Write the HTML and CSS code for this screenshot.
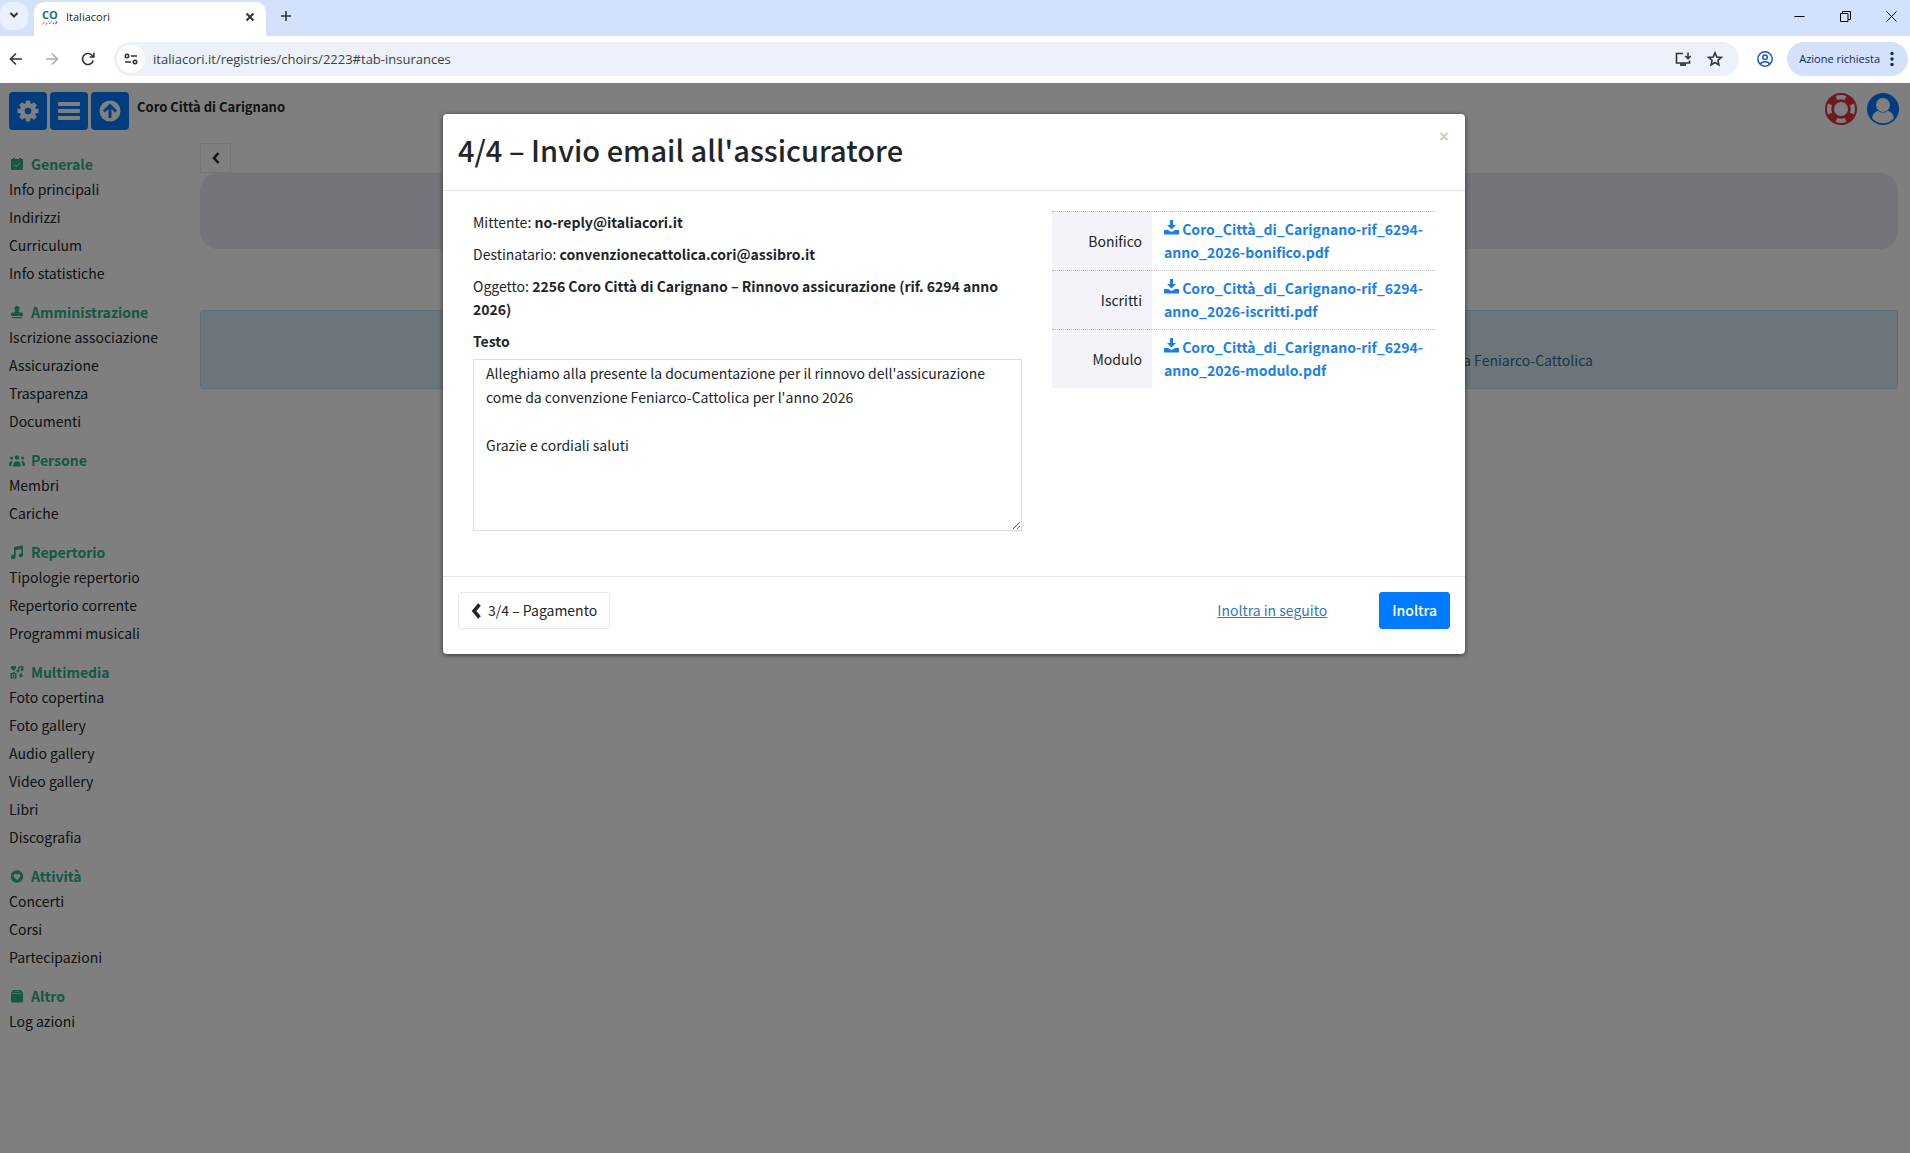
FILE: index.html
```html
<!DOCTYPE html>
<html lang="it">
<head>
<meta charset="utf-8">
<title>Italiacori</title>
<link rel="stylesheet" href="styles.css">
</head>
<body>
<header class="browser">
  <div class="tabstrip">
    <button class="tab-search" aria-label="Cerca schede"><svg width="10" height="10" viewBox="0 0 10 10"><path d="M1.5 3l3.500 3.500L8.500 3" class="line heavy"/></svg></button>
    <div class="tab">
      <span class="favicon" aria-hidden="true"><b>CO</b><svg width="16" height="5" viewBox="0 0 16 5" stroke-width="1.300"><path d="M.5 4.500l2-3" stroke="#e5a52b"/><path d="M4 4.500l1-1.500M6 1.500l.5-.7" stroke="#d9534f"/><path d="M7.500 4l1-1.500M9.500 1.500l.5-.7" stroke="#2f7bbf"/><path d="M11 4l1-1.500" stroke="#3c9d5b"/><path d="M13.500 4.200l1.500-3" stroke="#a0458c"/></svg></span>
      <span class="tab-title">Italiacori</span>
      <button class="icon-btn" aria-label="Chiudi scheda"><svg width="10" height="10" viewBox="0 0 10 10"><path d="M1.500 1.500l7 7M8.500 1.500l-7 7" class="line heavy"/></svg></button>
    </div>
    <button class="icon-btn new-tab" aria-label="Nuova scheda"><svg width="12" height="12" viewBox="0 0 12 12"><path d="M6 1v10M1 6h10" class="line"/></svg></button>
    <div class="window-controls">
      <button class="icon-btn" aria-label="Riduci"><svg width="11" height="11" viewBox="0 0 11 11"><path d="M.5 5.500h10" stroke="#000"/></svg></button>
      <button class="icon-btn" aria-label="Ripristina"><svg width="11" height="11" viewBox="0 0 11 11" fill="none" stroke="#000"><path d="M.5 2.500h7.500v8H.5zM2.500 2.500V.5h8v8H8"/></svg></button>
      <button class="icon-btn" aria-label="Chiudi"><svg width="11" height="11" viewBox="0 0 11 11"><path d="M.5.5l10 10M10.500.5l-10 10" stroke="#000"/></svg></button>
    </div>
  </div>
  <div class="toolbar">
    <div class="nav-buttons">
      <button class="icon-btn" aria-label="Indietro"><svg width="14" height="14" viewBox="0 0 14 14"><path d="M13 7H2M7 1.500L1.500 7 7 12.500" class="line"/></svg></button>
      <button class="icon-btn faded" aria-label="Avanti"><svg width="14" height="14" viewBox="0 0 14 14"><path d="M1 7h11M7 1.500L12.500 7 7 12.500" class="line"/></svg></button>
      <button class="icon-btn" aria-label="Ricarica"><svg width="14" height="14" viewBox="0 0 14 14"><path d="M12.300 8.500A5.500 5.500 0 1 1 11 3.200L12.800 5M12.900.8V5H8.700" class="line"/></svg></button>
    </div>
    <div class="address">
      <button class="site-info" aria-label="Informazioni sul sito"><svg width="14" height="12" viewBox="0 0 14 12"><g class="line"><circle cx="3" cy="3" r="1.700"/><path d="M7 3h6M1 9h6"/><circle cx="11" cy="9" r="1.700"/></g></svg></button>
      <input class="url" type="text" value="italiacori.it/registries/choirs/2223#tab-insurances" aria-label="Indirizzo">
      <button class="icon-btn" aria-label="Installa"><svg width="16" height="15" viewBox="0 0 16 15"><path d="M8 1.500H1.500v9.500h13V8.500M13 .5v6M10.300 4L13 6.700 15.700 4" class="line"/><path d="M5 11h6v3H5z" fill="#444"/></svg></button>
      <button class="icon-btn" aria-label="Preferiti"><svg width="16" height="16" viewBox="0 0 16 16"><path d="M8 1.800l1.800 4.200 4.600.4-3.500 3 1 4.500L8 11.500l-3.900 2.400 1-4.500-3.500-3L6.200 6z" class="line"/></svg></button>
    </div>
    <button class="icon-btn profile" aria-label="Profilo"><svg width="16" height="16" viewBox="0 0 16 16" fill="none" stroke="#1b5bb5" stroke-width="1.500"><circle cx="8" cy="8" r="7.200"/><circle cx="8" cy="6.300" r="2.300"/><path d="M3.300 13.200c1.800-3.200 7.600-3.200 9.400 0"/></svg></button>
    <button class="action-chip">Azione richiesta<svg width="4" height="16" viewBox="0 0 4 16" fill="#0b2a5b"><circle cx="2" cy="2.500" r="1.700"/><circle cx="2" cy="8" r="1.700"/><circle cx="2" cy="13.500" r="1.700"/></svg></button>
  </div>
</header>

<div class="page">
  <div class="app">
    <div class="topbar">
      <button class="square" aria-label="Impostazioni"><svg width="22" height="22" viewBox="0 0 22 22"><g fill="#fff"><circle cx="11" cy="11" r="8"/><g id="teeth"><rect x="8.700" y=".5" width="4.600" height="21" rx="1"/><rect x=".5" y="8.700" width="21" height="4.600" rx="1"/></g><use href="#teeth" transform="rotate(45 11 11)"/></g><circle cx="11" cy="11" r="3.300" fill="#007bff"/></svg></button>
      <button class="square" aria-label="Menu"><svg width="22" height="20" viewBox="0 0 22 20" fill="#fff"><rect y="1" width="22" height="4" rx="1"/><rect y="8" width="22" height="4" rx="1"/><rect y="15" width="22" height="4" rx="1"/></svg></button>
      <button class="square" aria-label="Torna su"><svg width="22" height="22" viewBox="0 0 22 22"><circle cx="11" cy="11" r="10.500" fill="#fff"/><path d="M11 18V6M5 11.500l6-6 6 6" fill="none" stroke="#007bff" stroke-width="3"/></svg></button>
      <strong class="choir">Coro Città di Carignano</strong>
      <a class="round" href="#aiuto" aria-label="Aiuto"><svg width="32" height="32" viewBox="0 0 32 32" fill="none"><circle cx="16" cy="16" r="11.500" stroke="#dc3545" stroke-width="8"/><g stroke="#fff" stroke-width="5"><path d="M11.300 4.700a12.200 12.200 0 0 1 9.400 0M27.300 11.300a12.200 12.200 0 0 1 0 9.400M20.700 27.300a12.200 12.200 0 0 1-9.400 0M4.700 20.700a12.200 12.200 0 0 1 0-9.400"/></g><circle cx="16" cy="16" r="15" stroke="#dc3545" stroke-width="2"/><circle cx="16" cy="16" r="8" stroke="#dc3545" stroke-width="2"/></svg></a>
      <a class="round" href="#profilo" aria-label="Utente"><svg width="32" height="32" viewBox="0 0 32 32"><circle cx="16" cy="16" r="16" fill="#007bff"/><circle cx="16" cy="12" r="7" fill="#fff"/><path d="M5 25c1-5 4-7 6.500-7 2.500 2 6.500 2 9 0 2.500 0 5.500 2 6.500 7a14 14 0 0 1-22 0z" fill="#fff"/></svg></a>
    </div>
    <div class="columns">
      <nav class="sidebar">
        <section>
          <h2><svg viewBox="0 0 16 16"><path d="M4 2h2v1h4V2h2v1h2v10a1 1 0 0 1-1 1H3a1 1 0 0 1-1-1V3h2z"/><path d="M5 8.500l2.200 2.200L11 6.800" class="cut"/></svg>Generale</h2>
          <a href="#info">Info principali</a><a href="#indirizzi">Indirizzi</a><a href="#curriculum">Curriculum</a><a href="#statistiche">Info statistiche</a>
        </section>
        <section>
          <h2><svg viewBox="0 0 16 16"><path d="M8 2a2.600 2.600 0 0 1 2.200 4c-.8 1.200-.7 2.500 1 2.500h1.300A1.500 1.500 0 0 1 14 10v2H2v-2a1.500 1.500 0 0 1 1.500-1.500h1.300c1.700 0 1.800-1.300 1-2.500A2.600 2.600 0 0 1 8 2zM3 13h10v1.300H3z"/></svg>Amministrazione</h2>
          <a href="#iscrizione">Iscrizione associazione</a><a href="#assicurazione">Assicurazione</a><a href="#trasparenza">Trasparenza</a><a href="#documenti">Documenti</a>
        </section>
        <section>
          <h2><svg viewBox="0 0 16 16"><circle cx="8" cy="5.500" r="2.300"/><circle cx="2.500" cy="6" r="1.500"/><circle cx="13.500" cy="6" r="1.500"/><path d="M4 14.500c0-7 8-7 8 0zM0 14C0 10 1 9 3.700 9 2.700 11 2.500 12 2.500 14zM16 14C16 10 15 9 12.300 9c1 2 1.200 3 1.200 5z"/></svg>Persone</h2>
          <a href="#membri">Membri</a><a href="#cariche">Cariche</a>
        </section>
        <section>
          <h2><svg viewBox="0 0 16 16"><path d="M5 3l9-1.800v10.300a2.200 1.900 0 1 1-1.600-1.900V5L6.600 6.300V13A2.300 2 0 1 1 5 11z"/></svg>Repertorio</h2>
          <a href="#tipologie">Tipologie repertorio</a><a href="#corrente">Repertorio corrente</a><a href="#programmi">Programmi musicali</a>
        </section>
        <section>
          <h2><svg viewBox="0 0 16 16"><path d="M4.500 7L2 4.500a1.600 1.600 0 0 1 2.500-2 1.600 1.600 0 0 1 2.500 2zM9 3l5.500-1.300v4a1.400 1.400 0 1 1-1-1.300v-1l-3.200.8v2.700A1.400 1.400 0 1 1 9 5.800zM2.500 9h1l.5-.8h1.500L6 9h1.500v5.500h-6V9zM11.500 9H13l-.5 2h1.800L11 14.500l.5-2.300H10z"/><circle cx="4.500" cy="11.800" r="1.400" class="cut"/></svg>Multimedia</h2>
          <a href="#copertina">Foto copertina</a><a href="#foto">Foto gallery</a><a href="#audio">Audio gallery</a><a href="#video">Video gallery</a><a href="#libri">Libri</a><a href="#discografia">Discografia</a>
        </section>
        <section>
          <h2><svg viewBox="0 0 16 16"><circle cx="8" cy="8.500" r="6.200"/><path d="M8 12L5 9a1.800 1.800 0 0 1 3-2.300A1.800 1.800 0 0 1 11 9z" fill="#fff"/></svg>Attività</h2>
          <a href="#concerti">Concerti</a><a href="#corsi">Corsi</a><a href="#partecipazioni">Partecipazioni</a>
        </section>
        <section>
          <h2><svg viewBox="0 0 16 16"><path d="M4 2h8l2 3v8a1.500 1.500 0 0 1-1.500 1.500h-9A1.500 1.500 0 0 1 2 13V5z"/><path d="M3 5.500h10M5.500 3.300h5" stroke="#fff" stroke-width=".6"/></svg>Altro</h2>
          <a href="#log">Log azioni</a>
        </section>
      </nav>
      <main class="content">
        <button class="back" aria-label="Indietro"><svg width="8" height="12" viewBox="0 0 8 12"><path d="M6.500 1L2 6l4.500 5" fill="none" stroke="#212529" stroke-width="2.500"/></svg></button>
        <div class="hero"></div>
        <p class="notice">a Feniarco-Cattolica</p>
      </main>
    </div>
  </div>

  <div class="backdrop">
    <form class="modal" role="dialog" aria-labelledby="titolo">
      <div class="modal-head">
        <h1 id="titolo">4/4 – Invio email all'assicuratore</h1>
        <button type="button" class="close" aria-label="Chiudi">×</button>
      </div>
      <div class="modal-body">
        <div class="mail">
          <p>Mittente: <b>no-reply@italiacori.it</b></p>
          <p>Destinatario: <b>convenzionecattolica.cori@assibro.it</b></p>
          <p>Oggetto: <b>2256 Coro Città di Carignano – Rinnovo assicurazione (rif. 6294 anno 2026)</b></p>
          <label for="testo">Testo</label>
          <textarea id="testo" rows="7">Alleghiamo alla presente la documentazione per il rinnovo dell'assicurazione come da convenzione Feniarco-Cattolica per l'anno 2026

Grazie e cordiali saluti</textarea>
        </div>
        <table class="files">
          <tr><th scope="row">Bonifico</th><td><a href="#bonifico"><svg width="15" height="15" viewBox="0 0 15 15"><path d="M6 0h3v5h3L7.500 9.500 3 5h3zM0 10h4l3.500 2L11 10h4v4.500H0z"/></svg> Coro_Città_di_Carignano-rif_6294-<br>anno_2026-bonifico.pdf</a></td></tr>
          <tr><th scope="row">Iscritti</th><td><a href="#iscritti"><svg width="15" height="15" viewBox="0 0 15 15"><path d="M6 0h3v5h3L7.500 9.500 3 5h3zM0 10h4l3.500 2L11 10h4v4.500H0z"/></svg> Coro_Città_di_Carignano-rif_6294-<br>anno_2026-iscritti.pdf</a></td></tr>
          <tr><th scope="row">Modulo</th><td><a href="#modulo"><svg width="15" height="15" viewBox="0 0 15 15"><path d="M6 0h3v5h3L7.500 9.500 3 5h3zM0 10h4l3.500 2L11 10h4v4.500H0z"/></svg> Coro_Città_di_Carignano-rif_6294-<br>anno_2026-modulo.pdf</a></td></tr>
        </table>
      </div>
      <div class="modal-foot">
        <button type="button" class="btn"><svg width="10" height="16" viewBox="0 0 10 16"><path d="M8.500 1.500L3 8l5.500 6.500" fill="none" stroke="#212529" stroke-width="3.500"/></svg>3/4 – Pagamento</button>
        <a class="later" href="#dopo">Inoltra in seguito</a>
        <button type="button" class="btn primary">Inoltra</button>
      </div>
    </form>
  </div>
</div>
</body>
</html>
```
FILE: styles.css
```css
* { box-sizing: border-box; }

body {
  margin: 0;
  min-height: 100vh;
  display: flex;
  flex-direction: column;
  font: 14px/23px "Noto Sans CJK JP", "Open Sans", sans-serif;
  color: #212529;
}

button {
  padding: 0;
  border: 0;
  background: none;
  font: inherit;
  color: inherit;
}

svg { flex: none; }

/* Browser frame */
.browser {
  font: 11px/16px "Open Sans", "Noto Sans", sans-serif;
  color: #1f1f1f;
}

.line {
  fill: none;
  stroke: #333;
  stroke-width: 1.600;
}

.heavy { stroke-width: 2; }

.tabstrip {
  display: flex;
  height: 36px;
  background: #d3e1fc;
}

.tab-search {
  width: 28px;
  height: 28px;
  margin-top: 2px;
  border-radius: 10px;
  background: #e9f0fd;
}

.tab {
  display: flex;
  align-items: center;
  width: 232px;
  margin: 2px 0 0 6px;
  padding: 0 10px 4px 8px;
  border-radius: 10px 10px 0 0;
  background: #fff;
}

.favicon {
  width: 16px;
  height: 16px;
  font: 11px/11px "Open Sans", sans-serif;
  color: #1d6e7d;
}

.favicon b, .favicon svg { display: block; }

.tab-title {
  flex: 1;
  margin-left: 8px;
}

.icon-btn {
  display: flex;
  align-items: center;
  justify-content: center;
  width: 24px;
  height: 24px;
}

.tab .icon-btn { width: 12px; }

.new-tab { margin: 4px 0 0 8px; }

.window-controls {
  display: flex;
  align-items: center;
  margin-left: auto;
  padding-bottom: 4px;
}

.window-controls .icon-btn { width: 46px; }
.window-controls .icon-btn:last-child { width: 38px; margin-left: 4px; }

.toolbar {
  display: flex;
  align-items: center;
  height: 47px;
  padding: 0 2px 1px 4px;
  background: #fff;
}

.nav-buttons {
  display: flex;
  gap: 12px;
  margin-right: 14px;
}

.faded { opacity: .4; }

.address {
  flex: 1;
  display: flex;
  align-items: center;
  gap: 8px;
  height: 34px;
  padding: 0 12px 0 3px;
  border-radius: 17px;
  background: #ecf0f9;
}

.site-info {
  display: flex;
  align-items: center;
  justify-content: center;
  width: 28px;
  height: 28px;
  border-radius: 14px;
  background: #fff;
}

.url {
  flex: 1;
  padding: 0;
  border: 0;
  background: none;
  font: inherit;
  font-size: 13px;
  color: #3c3f43;
}

.profile { margin: 0 10px 0 14px; }

.action-chip {
  display: flex;
  align-items: center;
  gap: 10px;
  height: 34px;
  padding: 0 14px 0 12px;
  border-radius: 17px;
  background: #d3e1fc;
  color: #0b2a5b;
}

/* Application */
.page {
  position: relative;
  flex: 1;
}

.topbar {
  display: flex;
  align-items: flex-start;
  gap: 3px;
  padding: 9px 11px 0 9px;
}

.square {
  display: flex;
  align-items: center;
  justify-content: center;
  width: 38px;
  height: 38px;
  border-radius: 4px;
  background: #007bff;
}

.choir {
  flex: 1;
  margin: 3px 0 0 5px;
  font-size: 13px;
}

.round {
  height: 32px;
  margin: 1px 0 0 7px;
}

.round svg { display: block; }

.columns {
  display: flex;
  padding: 13px 12px 0 9px;
}

.sidebar {
  width: 191px;
  padding-top: 10px;
}

.sidebar section { margin-bottom: 14px; }

.sidebar h2 {
  display: flex;
  align-items: center;
  gap: 6px;
  margin: 0;
  font-size: 14px;
  line-height: 22px;
  color: #28b08a;
}

.sidebar h2 svg {
  width: 16px;
  height: 16px;
  fill: currentColor;
}

.sidebar .cut {
  fill: none;
  stroke: #fff;
}

.sidebar a {
  display: block;
  line-height: 28px;
  color: inherit;
  text-decoration: none;
}

.content { flex: 1; }

.back {
  display: flex;
  align-items: center;
  justify-content: center;
  width: 31px;
  height: 30px;
  border: 1px solid #e7eaec;
}

.hero {
  height: 76px;
  border-radius: 18px;
  background: #ece6f4;
}

.notice {
  margin: 61px 0 0;
  padding: 38px 304px 16px 16px;
  border: 1px solid #bfdfec;
  border-radius: 3px;
  background: #d6eaf5;
  color: #31708f;
  text-align: right;
}

/* Dialog */
.backdrop {
  position: absolute;
  inset: 0;
  padding: 31px 2px 0 0;
  background: rgba(0, 0, 0, .5);
}

.modal {
  max-width: 1022px;
  margin: 0 auto;
  border-radius: 4px;
  background: #fff;
  box-shadow: 0 1px 5px rgba(0, 0, 0, .6);
}

.modal-head {
  display: flex;
  justify-content: space-between;
  align-items: flex-start;
  padding: 12px 15px 18px;
  border-bottom: 1px solid #e5e5e5;
}

.modal-head h1 {
  margin: 0;
  font-size: 29px;
  line-height: 46px;
  font-weight: 500;
}

.close {
  width: 12px;
  font: 700 17px/22px "Liberation Sans", sans-serif;
  color: #ccc;
}

.modal-body {
  display: flex;
  align-items: flex-start;
  gap: 30px;
  padding: 20px 30px 45px;
}

.mail { width: 549px; }

.mail p { margin: 0 0 9px; }

.mail label {
  display: block;
  margin-bottom: 6px;
  font-weight: 700;
}

.mail textarea {
  display: block;
  width: 100%;
  padding: 1px 12px;
  border: 1px solid #ddd;
  background: #fff;
  font: inherit;
  line-height: 24px;
  color: inherit;
  resize: vertical;
}

.files {
  flex: 1;
  border-collapse: collapse;
}

.files tr { border-top: 1px dotted #bbb; }

.files th {
  width: 100px;
  padding: 6px 10px;
  background: #f5f3fa;
  font-weight: 400;
  text-align: right;
}

.files td { padding: 6px 12px; }

.files a {
  color: #1a7fe8;
  font-weight: 700;
  text-decoration: none;
}

.files svg { fill: currentColor; }

.modal-foot {
  display: flex;
  align-items: center;
  padding: 15px 15px 25px;
  border-top: 1px solid #e5e5e5;
}

.btn {
  display: flex;
  align-items: center;
  gap: 7px;
  height: 37px;
  padding: 0 12px;
  border: 1px solid #e7eaec;
  border-radius: 3px;
}

.later {
  margin: 0 52px 0 auto;
  color: #337ab7;
}

.primary {
  border-color: #007bff;
  background: #007bff;
  color: #fff;
  font-weight: 500;
}
```
